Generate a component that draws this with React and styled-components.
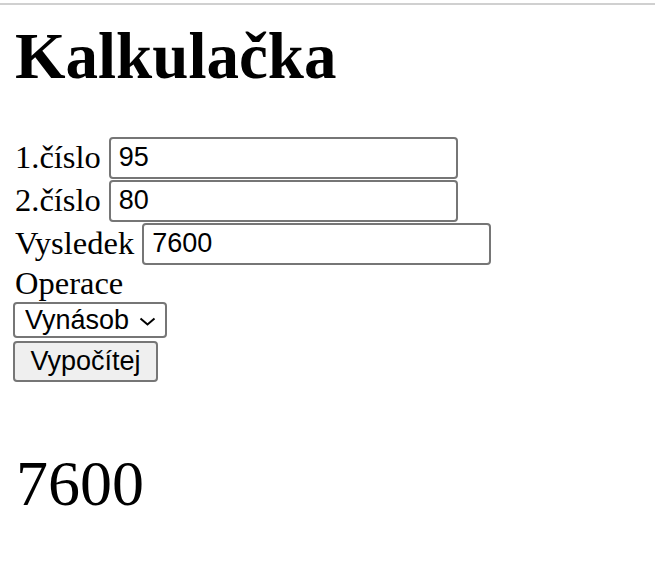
import React from "react";
import styled, { createGlobalStyle } from "styled-components";

const Global = createGlobalStyle`
  html, body { margin: 0; padding: 0; background: #fff; }
  body { font-family: "Liberation Serif", "Times New Roman", serif; color: #000; }
`;

const TopRule = styled.div`
  height: 3px;
  border-bottom: 2px solid #d0d0d0;
`;

const Page = styled.main`
  padding: 0 0 0 13px;
`;

const Title = styled.h1`
  margin: 14px 0 0 2px;
  font-size: 65px;
  line-height: 74px;
  font-weight: bold;
`;

const Form = styled.form`
  margin-top: 43px;
  display: flex;
  flex-direction: column;
  align-items: flex-start;
`;

const Row = styled.div`
  display: flex;
  align-items: center;
  height: 43px;
  gap: 8px;
  font-size: 32.5px;
  padding-left: 2px;
`;

const Label = styled.span`
  line-height: 1;
`;

const Field = styled.input`
  box-sizing: border-box;
  width: 349px;
  height: 42px;
  border: 2px solid #767676;
  border-radius: 4px;
  padding: 0 8px;
  font-family: "Liberation Sans", Arial, sans-serif;
  font-size: 27px;
  color: #000;
  background: #fff;
`;

const Caption = styled.div`
  font-size: 32.5px;
  line-height: 36px;
  padding-left: 2px;
`;

const SelectWrap = styled.div`
  position: relative;
  margin-top: 1px;
`;

const Select = styled.select`
  appearance: none;
  box-sizing: border-box;
  width: 154px;
  height: 36px;
  border: 2px solid #767676;
  border-radius: 4px;
  padding: 0 0 0 10px;
  font-family: "Liberation Sans", Arial, sans-serif;
  font-size: 27px;
  color: #000;
  background: #fff;
`;

const Chevron = styled.svg`
  position: absolute;
  right: 11px;
  top: 15px;
  pointer-events: none;
`;

const Button = styled.button`
  box-sizing: border-box;
  margin-top: 3px;
  width: 145px;
  height: 41px;
  border: 2px solid #767676;
  border-radius: 4px;
  background: #efefef;
  padding: 0;
  font-family: "Liberation Sans", Arial, sans-serif;
  font-size: 27px;
  color: #000;
`;

const Result = styled.div`
  margin: 66px 0 0 3px;
  font-size: 64px;
  line-height: 72px;
`;

export default function App() {
  return (
    <>
      <Global />
      <TopRule />
      <Page>
        <Title>Kalkulačka</Title>
        <Form onSubmit={(e) => e.preventDefault()}>
          <Row>
            <Label>1.číslo</Label>
            <Field defaultValue="95" />
          </Row>
          <Row>
            <Label>2.číslo</Label>
            <Field defaultValue="80" />
          </Row>
          <Row>
            <Label>Vysledek</Label>
            <Field defaultValue="7600" />
          </Row>
          <Caption>Operace</Caption>
          <SelectWrap>
            <Select defaultValue="krat">
              <option value="plus">Sečti</option>
              <option value="minus">Odečti</option>
              <option value="krat">Vynásob</option>
              <option value="deleno">Vyděl</option>
            </Select>
            <Chevron width="17" height="9" viewBox="0 0 17 9">
              <path d="M1.5 1.5 L8.5 7.5 L15.5 1.5" fill="none" stroke="#000" strokeWidth="2" />
            </Chevron>
          </SelectWrap>
          <Button type="submit">Vypočítej</Button>
        </Form>
        <Result>7600</Result>
      </Page>
    </>
  );
}
